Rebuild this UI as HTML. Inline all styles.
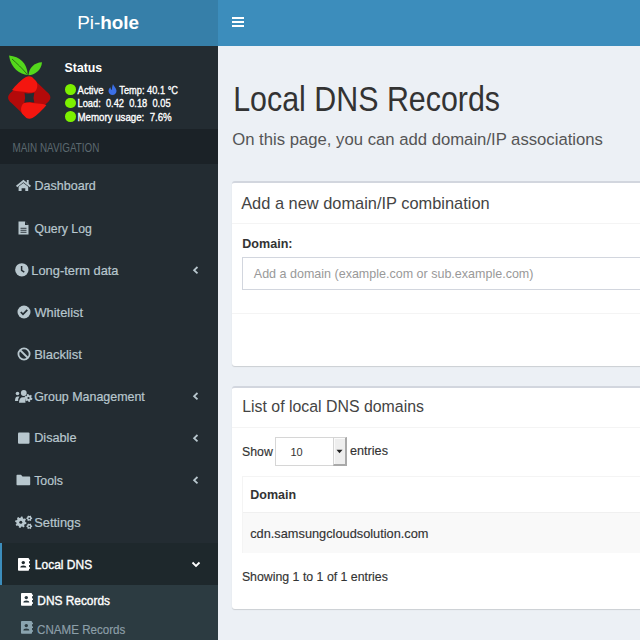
<!DOCTYPE html>
<html><head><meta charset="utf-8"><style>
html,body{margin:0;padding:0;width:640px;height:640px;overflow:hidden;background:#ecf0f5}
.t{position:absolute;font-family:'Liberation Sans', sans-serif;line-height:normal;white-space:nowrap}
svg{display:block}
</style></head><body>
<div style="position:absolute;left:0;top:0;width:218px;height:46px;background:#367fa9"></div><div style="position:absolute;left:218px;top:0;width:422px;height:46px;background:#3c8dbc"></div><div class="t" style="left:77.20px;top:12.30px;font-size:18.90px;color:#fff;font-weight:400;">Pi-<b>hole</b></div>
<div style="position:absolute;left:232px;top:17px;width:12px;height:2px;background:#fff"></div><div style="position:absolute;left:232px;top:21px;width:12px;height:2px;background:#fff"></div><div style="position:absolute;left:232px;top:25px;width:12px;height:2px;background:#fff"></div><div style="position:absolute;left:0;top:46px;width:218px;height:594px;background:#232c32"></div><div style="position:absolute;left:0;top:129px;width:218px;height:35px;background:#1b2227"></div><div style="position:absolute;left:0;top:543px;width:218px;height:42px;background:#1e282c"></div><div style="position:absolute;left:0;top:543px;width:2px;height:42px;background:#3c8dbc"></div><div style="position:absolute;left:0;top:585px;width:218px;height:55px;background:#2c3b41"></div><svg style="position:absolute;left:0;top:46px" width="60" height="80" viewBox="0 46 60 80">
<path d="M9 55.5 C20 56.5 27 63 27.8 75 C20 74 11 69 9 55.5 Z" fill="#54d81c"/>
<path d="M12 59 C17 63.5 22 68 27.3 74.5" stroke="#2a7410" stroke-width="1.0" fill="none"/>
<path d="M28.4 75.2 C29 68 34 62.5 42 62.2 C41.5 70 35 75 28.4 75.2 Z" fill="#54d81c"/>
<path d="M23.5 80 C26.5 75.5 31.5 75.5 34.5 80 L47 92 C51.5 95.5 51.5 99.5 47 103 L33.5 114.5 C30.5 118.5 26.5 118.5 23.5 114.5 L11.5 103 C7 99.5 7 95.5 11.5 92 Z" fill="#b30a0a"/>
<path d="M12 90 C15 86 22 79 26 77 Q29 75.5 32 77 L35.5 80.5 C38 83 38 89 35 91.5 C32 93.5 26 92 21 91.5 C17 91 14 91 12 90 Z" fill="#f4160f"/>
<path d="M46.4 105 C43.4 109 36.4 116 32.4 118 Q29.4 119.5 26.4 118 L22.9 114.5 C20.4 112 20.4 106 23.4 103.5 C26.4 101.5 32.4 103 37.4 103.5 C41.4 104 44.4 104 46.4 105 Z" fill="#f4160f"/>
<path d="M24.6 93 Q29.3 94.3 34.3 92.8 Q32.8 97.7 34.3 102.6 Q29.3 101.3 24.3 102.8 Q25.8 97.7 24.6 93 Z" fill="#232c32"/>
</svg><div class="t" style="left:64.60px;top:61.07px;font-size:12.30px;color:#fff;font-weight:700;transform:scaleY(1.04);transform-origin:0 11.13px;">Status</div>
<div style="position:absolute;left:65px;top:84.2px;width:10.6px;height:10.6px;border-radius:50%;background:#7cf000"></div><div style="position:absolute;left:65px;top:97.7px;width:10.6px;height:10.6px;border-radius:50%;background:#7cf000"></div><div style="position:absolute;left:65px;top:111.0px;width:10.6px;height:10.6px;border-radius:50%;background:#7cf000"></div><div class="t" style="left:77.50px;top:85.21px;font-size:9.60px;color:#fff;font-weight:400;-webkit-text-stroke:0.3px #fff;transform:scaleY(1.15);transform-origin:0 8.69px;">Active</div>
<svg style="position:absolute;left:108px;top:84px" width="9" height="11" viewBox="0 0 9 11"><path d="M5 0 C5.5 2 8.5 4 8.5 7 C8.5 9.3 6.8 11 4.5 11 C2.2 11 0.5 9.3 0.5 7 C0.5 5 1.8 3.8 2.5 3.2 C2.5 4.5 3 5.5 4 6 C3.8 3.5 4.5 1.5 5 0 Z" fill="#3b6fe6"/></svg><div class="t" style="left:119.30px;top:85.53px;font-size:9.25px;color:#fff;font-weight:400;-webkit-text-stroke:0.3px #fff;transform:scaleY(1.15);transform-origin:0 8.37px;">Temp:&nbsp;40.1&nbsp;°C</div>
<div class="t" style="left:77.50px;top:98.78px;font-size:9.30px;color:#fff;font-weight:400;-webkit-text-stroke:0.3px #fff;transform:scaleY(1.15);transform-origin:0 8.42px;">Load:&nbsp;&nbsp;0.42&nbsp;&nbsp;0.18&nbsp;&nbsp;0.05</div>
<div class="t" style="left:77.50px;top:111.72px;font-size:9.70px;color:#fff;font-weight:400;-webkit-text-stroke:0.3px #fff;transform:scaleY(1.15);transform-origin:0 8.78px;">Memory&nbsp;usage:&nbsp;&nbsp;7.6%</div>
<div class="t" style="left:12.50px;top:142.54px;font-size:9.90px;color:#5c696f;font-weight:400;transform:scaleY(1.2);transform-origin:0 8.96px;">MAIN NAVIGATION</div>
<div class="t" style="left:34.40px;top:179.42px;font-size:12.57px;color:#b8c7ce;font-weight:400;-webkit-text-stroke:0.2px #b8c7ce;transform:scaleY(1.05);transform-origin:0 11.38px;">Dashboard</div>
<div class="t" style="left:34.50px;top:221.69px;font-size:12.28px;color:#b8c7ce;font-weight:400;-webkit-text-stroke:0.2px #b8c7ce;transform:scaleY(1.05);transform-origin:0 11.11px;">Query Log</div>
<div class="t" style="left:31.30px;top:263.36px;font-size:12.86px;color:#b8c7ce;font-weight:400;-webkit-text-stroke:0.2px #b8c7ce;transform:scaleY(1.05);transform-origin:0 11.64px;">Long-term data</div>
<div class="t" style="left:34.50px;top:305.17px;font-size:12.85px;color:#b8c7ce;font-weight:400;-webkit-text-stroke:0.2px #b8c7ce;transform:scaleY(1.05);transform-origin:0 11.63px;">Whitelist</div>
<div class="t" style="left:34.20px;top:347.29px;font-size:13.00px;color:#b8c7ce;font-weight:400;-webkit-text-stroke:0.2px #b8c7ce;transform:scaleY(1.05);transform-origin:0 11.77px;">Blacklist</div>
<div class="t" style="left:34.20px;top:389.53px;font-size:12.45px;color:#b8c7ce;font-weight:400;-webkit-text-stroke:0.2px #b8c7ce;transform:scaleY(1.05);transform-origin:0 11.27px;">Group Management</div>
<div class="t" style="left:34.20px;top:431.32px;font-size:12.69px;color:#b8c7ce;font-weight:400;-webkit-text-stroke:0.2px #b8c7ce;transform:scaleY(1.05);transform-origin:0 11.48px;">Disable</div>
<div class="t" style="left:34.20px;top:473.65px;font-size:12.32px;color:#b8c7ce;font-weight:400;-webkit-text-stroke:0.2px #b8c7ce;transform:scaleY(1.05);transform-origin:0 11.15px;">Tools</div>
<div class="t" style="left:34.20px;top:515.16px;font-size:12.86px;color:#b8c7ce;font-weight:400;-webkit-text-stroke:0.2px #b8c7ce;transform:scaleY(1.05);transform-origin:0 11.64px;">Settings</div>
<div class="t" style="left:34.80px;top:558.04px;font-size:12.00px;color:#fff;font-weight:400;-webkit-text-stroke:0.35px #fff;transform:scaleY(1.06);transform-origin:0 10.86px;">Local DNS</div>
<div class="t" style="left:37.30px;top:594.13px;font-size:11.90px;color:#fff;font-weight:400;-webkit-text-stroke:0.35px #fff;transform:scaleY(1.1);transform-origin:0 10.77px;">DNS Records</div>
<div class="t" style="left:37.10px;top:622.50px;font-size:11.60px;color:#8c9fa8;font-weight:400;-webkit-text-stroke:0.15px #8c9fa8;transform:scaleY(1.12);transform-origin:0 10.50px;">CNAME Records</div>
<svg style="position:absolute;left:192px;top:265.7px" width="7" height="9" viewBox="0 0 7 9"><path d="M5.5 1 L2.1 4.2 L5.5 7.4" stroke="#b8c7ce" stroke-width="1.8" fill="none"/></svg><svg style="position:absolute;left:192px;top:391.5px" width="7" height="9" viewBox="0 0 7 9"><path d="M5.5 1 L2.1 4.2 L5.5 7.4" stroke="#b8c7ce" stroke-width="1.8" fill="none"/></svg><svg style="position:absolute;left:192px;top:433.5px" width="7" height="9" viewBox="0 0 7 9"><path d="M5.5 1 L2.1 4.2 L5.5 7.4" stroke="#b8c7ce" stroke-width="1.8" fill="none"/></svg><svg style="position:absolute;left:192px;top:475.5px" width="7" height="9" viewBox="0 0 7 9"><path d="M5.5 1 L2.1 4.2 L5.5 7.4" stroke="#b8c7ce" stroke-width="1.8" fill="none"/></svg><svg style="position:absolute;left:191px;top:561px" width="10" height="7" viewBox="0 0 10 7"><path d="M1.5 1.5 L5 5 L8.5 1.5" stroke="#fff" stroke-width="1.8" fill="none"/></svg><svg style="position:absolute;left:15px;top:179px" width="17" height="13" viewBox="0 0 17 13"><path d="M1.6 7.6 L8.4 1.9 L15.4 7.6" stroke="#b8c7ce" stroke-width="1.9" fill="none"/><rect x="11.8" y="1" width="1.9" height="4" fill="#b8c7ce"/><path d="M3.6 7.8 L8.4 4 L13.2 7.8 L13.2 12 L10.3 12 L10.3 9.3 L6.6 9.3 L6.6 12 L3.6 12 Z" fill="#b8c7ce"/></svg><svg style="position:absolute;left:18px;top:221px" width="11" height="14" viewBox="0 0 11 14"><path d="M0.5 0.5 L7 0.5 L10.5 4 L10.5 13.5 L0.5 13.5 Z" fill="#b8c7ce"/><path d="M7 0.5 L7 4 L10.5 4" fill="#232c32"/><rect x="2.5" y="6.8" width="6" height="0.9" fill="#232c32"/><rect x="2.5" y="8.8" width="6" height="0.9" fill="#232c32"/><rect x="2.5" y="10.8" width="6" height="0.9" fill="#232c32"/></svg><svg style="position:absolute;left:15px;top:262.8px" width="14" height="14" viewBox="0 0 14 14"><circle cx="6.85" cy="6.85" r="6.7" fill="#b8c7ce"/><path d="M6.6 3 L6.6 7.3 L9.3 9.2" stroke="#232c32" stroke-width="1.5" fill="none"/></svg><svg style="position:absolute;left:17px;top:305px" width="14" height="14" viewBox="0 0 14 14"><circle cx="7" cy="7" r="6.5" fill="#b8c7ce"/><path d="M3.8 7 L6 9.3 L10.3 4.8" stroke="#232c32" stroke-width="1.8" fill="none"/></svg><svg style="position:absolute;left:17px;top:347px" width="14" height="14" viewBox="0 0 14 14"><circle cx="7" cy="7" r="5.6" stroke="#b8c7ce" stroke-width="1.8" fill="none"/><path d="M3 3 L11 11" stroke="#b8c7ce" stroke-width="1.8"/></svg><svg style="position:absolute;left:14px;top:389px" width="20" height="15" viewBox="0 0 20 15"><circle cx="3.5" cy="4.5" r="1.8" fill="#b8c7ce"/><path d="M1 12 Q1 7.6 3.8 7.6 L5.5 7.6 Q4 9.5 4.2 12 Z" fill="#b8c7ce"/><circle cx="9.8" cy="4" r="2.9" fill="#b8c7ce"/><path d="M5 13.8 Q5 8.2 9 8.2 L11 8.2 Q12 8.2 12.5 8.6 Q10.5 11 11.5 13.8 Z" fill="#b8c7ce"/><polygon points="17.50,8.96 18.48,9.36 17.99,10.95 16.95,10.73 16.04,11.58 16.18,12.63 14.56,13.00 14.23,11.99 13.04,11.62 12.19,12.27 11.06,11.05 11.78,10.26 11.50,9.04 10.52,8.64 11.01,7.05 12.05,7.27 12.96,6.42 12.82,5.37 14.44,5.00 14.77,6.01 15.96,6.38 16.81,5.73 17.94,6.95 17.22,7.74" fill="#b8c7ce"/><circle cx="14.5" cy="9.0" r="1.1" fill="#232c32"/></svg><svg style="position:absolute;left:18px;top:432px" width="12" height="12" viewBox="0 0 12 12"><rect x="0" y="0.5" width="11.5" height="11.3" rx="1" fill="#b8c7ce"/></svg><svg style="position:absolute;left:16px;top:474px" width="15" height="12" viewBox="0 0 15 12"><path d="M0.5 1.5 Q0.5 0.8 1.2 0.8 L5 0.8 L6.5 2.5 L13.5 2.5 Q14.2 2.5 14.2 3.2 L14.2 10.5 Q14.2 11.2 13.5 11.2 L1.2 11.2 Q0.5 11.2 0.5 10.5 Z" fill="#b8c7ce"/></svg><svg style="position:absolute;left:14px;top:514px" width="20" height="18" viewBox="0 0 20 18"><polygon points="11.30,8.04 12.49,8.44 12.14,10.19 10.88,10.10 10.09,11.27 10.65,12.40 9.17,13.39 8.34,12.43 6.96,12.70 6.56,13.89 4.81,13.54 4.90,12.28 3.73,11.49 2.60,12.05 1.61,10.57 2.57,9.74 2.30,8.36 1.11,7.96 1.46,6.21 2.72,6.30 3.51,5.13 2.95,4.00 4.43,3.01 5.26,3.97 6.64,3.70 7.04,2.51 8.79,2.86 8.70,4.12 9.87,4.91 11.00,4.35 11.99,5.83 11.03,6.66" fill="#b8c7ce"/><circle cx="6.8" cy="8.2" r="1.5" fill="#232c32"/><polygon points="17.49,3.59 18.14,3.70 18.14,4.90 17.49,5.01 17.01,5.84 17.24,6.46 16.20,7.06 15.78,6.55 14.82,6.55 14.40,7.06 13.36,6.46 13.59,5.84 13.11,5.01 12.46,4.90 12.46,3.70 13.11,3.59 13.59,2.76 13.36,2.14 14.40,1.54 14.82,2.05 15.78,2.05 16.20,1.54 17.24,2.14 17.01,2.76" fill="#b8c7ce"/><circle cx="15.3" cy="4.3" r="0.9" fill="#232c32"/><polygon points="17.49,11.59 18.14,11.70 18.14,12.90 17.49,13.01 17.01,13.84 17.24,14.46 16.20,15.06 15.78,14.55 14.82,14.55 14.40,15.06 13.36,14.46 13.59,13.84 13.11,13.01 12.46,12.90 12.46,11.70 13.11,11.59 13.59,10.76 13.36,10.14 14.40,9.54 14.82,10.05 15.78,10.05 16.20,9.54 17.24,10.14 17.01,10.76" fill="#b8c7ce"/><circle cx="15.3" cy="12.3" r="0.9" fill="#232c32"/></svg><svg style="position:absolute;left:18px;top:558px" width="12" height="14" viewBox="0 0 12 14"><rect x="0" y="0" width="11" height="12.8" rx="0.8" fill="#fff"/><rect x="11" y="1.6" width="1" height="1.6" fill="#fff"/><rect x="11" y="5.4" width="1" height="1.6" fill="#fff"/><rect x="11" y="9.2" width="1" height="1.6" fill="#fff"/><circle cx="5.3" cy="4.6" r="1.7" fill="#1e282c"/><path d="M2.3 9.6 Q2.3 7.4 5.3 7.4 Q8.3 7.4 8.3 9.6 Z" fill="#1e282c"/></svg><svg style="position:absolute;left:20.5px;top:592.5px" width="12" height="14" viewBox="0 0 12 14"><rect x="0" y="0" width="11" height="12.8" rx="0.8" fill="#fff"/><rect x="11" y="1.6" width="1" height="1.6" fill="#fff"/><rect x="11" y="5.4" width="1" height="1.6" fill="#fff"/><rect x="11" y="9.2" width="1" height="1.6" fill="#fff"/><circle cx="5.3" cy="4.6" r="1.7" fill="#2c3b41"/><path d="M2.3 9.6 Q2.3 7.4 5.3 7.4 Q8.3 7.4 8.3 9.6 Z" fill="#2c3b41"/></svg><svg style="position:absolute;left:20.5px;top:621px" width="12" height="14" viewBox="0 0 12 14"><rect x="0" y="0" width="11" height="12.8" rx="0.8" fill="#8aa4af"/><rect x="11" y="1.6" width="1" height="1.6" fill="#8aa4af"/><rect x="11" y="5.4" width="1" height="1.6" fill="#8aa4af"/><rect x="11" y="9.2" width="1" height="1.6" fill="#8aa4af"/><circle cx="5.3" cy="4.6" r="1.7" fill="#2c3b41"/><path d="M2.3 9.6 Q2.3 7.4 5.3 7.4 Q8.3 7.4 8.3 9.6 Z" fill="#2c3b41"/></svg><div style="position:absolute;left:218px;top:46px;width:422px;height:594px;background:#ecf0f5"></div><div class="t" style="left:233.20px;top:83.49px;font-size:30.40px;color:#333;font-weight:400;transform:scaleY(1.13);transform-origin:0 27.51px;">Local DNS Records</div>
<div class="t" style="left:232.20px;top:130.29px;font-size:16.70px;color:#555;font-weight:400;transform:scaleY(1.04);transform-origin:0 15.11px;">On this page, you can add domain/IP associations</div>
<div style="position:absolute;left:232px;top:181px;width:420px;height:185px;background:#fff;border-top:2.5px solid #d2d6de;border-radius:3px;box-shadow:0 1px 1px rgba(0,0,0,0.14);box-sizing:border-box"></div><div style="position:absolute;left:232px;top:223px;width:408px;height:1px;background:#f4f4f4"></div><div style="position:absolute;left:232px;top:313px;width:408px;height:1px;background:#f4f4f4"></div><div class="t" style="left:241.20px;top:194.16px;font-size:16.40px;color:#444;font-weight:400;">Add a new domain/IP combination</div>
<div class="t" style="left:242.30px;top:236.64px;font-size:12.55px;color:#333;font-weight:700;">Domain:</div>
<div style="position:absolute;left:242px;top:257px;width:420px;height:32.5px;border:1px solid #d2d6de;box-sizing:border-box;background:#fff"></div><div class="t" style="left:253.80px;top:267.07px;font-size:12.52px;color:#999;font-weight:400;">Add a domain (example.com or sub.example.com)</div>
<div style="position:absolute;left:232px;top:386px;width:420px;height:223px;background:#fff;border-top:2.5px solid #d2d6de;border-radius:3px;box-shadow:0 1px 1px rgba(0,0,0,0.14);box-sizing:border-box"></div><div style="position:absolute;left:232px;top:427px;width:408px;height:1px;background:#f4f4f4"></div><div class="t" style="left:242.20px;top:397.53px;font-size:15.88px;color:#444;font-weight:400;">List of local DNS domains</div>
<div class="t" style="left:242.00px;top:444.56px;font-size:12.31px;color:#333;font-weight:400;-webkit-text-stroke:0.15px #333;">Show</div>
<div style="position:absolute;left:275px;top:437px;width:71.5px;height:28.5px;border:1px solid #d6d6d6;box-sizing:border-box;background:#fff"></div><div style="position:absolute;left:332.5px;top:437px;width:14px;height:28.5px;background:#eeeeee;border-left:1px solid #d4d4d4;border-top:1px solid #d4d4d4;border-right:2px solid #a9a9a9;border-bottom:2px solid #a9a9a9;box-shadow:inset 1px 1px 0 #fafafa;box-sizing:border-box"></div><svg style="position:absolute;left:336px;top:449px" width="7" height="5" viewBox="0 0 7 5"><path d="M0.5 0.8 L6.5 0.8 L3.5 4.2 Z" fill="#222"/></svg><div class="t" style="left:290.50px;top:445.65px;font-size:11.00px;color:#333;font-weight:400;">10</div>
<div class="t" style="left:350.10px;top:443.58px;font-size:12.62px;color:#333;font-weight:400;-webkit-text-stroke:0.15px #333;">entries</div>
<div style="position:absolute;left:242px;top:476px;width:420px;height:77px;border:1px solid #f4f4f4;box-sizing:border-box"></div><div style="position:absolute;left:243px;top:512.5px;width:400px;height:40px;background:#f9f9f9"></div><div style="position:absolute;left:243px;top:511.5px;width:400px;height:1.5px;background:#f0f0f0"></div><div class="t" style="left:250.30px;top:487.69px;font-size:12.50px;color:#333;font-weight:700;">Domain</div>
<div class="t" style="left:250.20px;top:525.83px;font-size:12.79px;color:#333;font-weight:400;-webkit-text-stroke:0.15px #333;">cdn.samsungcloudsolution.com</div>
<div class="t" style="left:241.90px;top:570.23px;font-size:12.34px;color:#333;font-weight:400;-webkit-text-stroke:0.15px #333;">Showing 1 to 1 of 1 entries</div>

</body></html>
